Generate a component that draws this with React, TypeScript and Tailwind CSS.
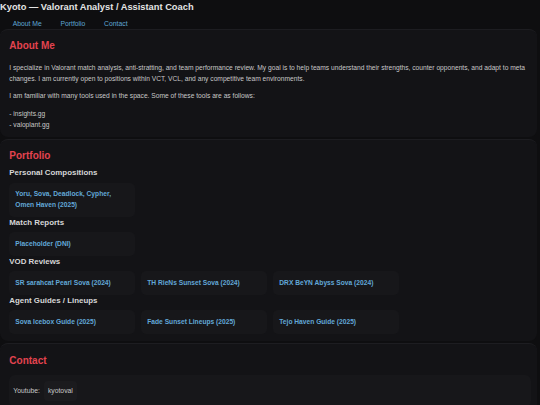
import React from "react";

const Box = ({ children }: { children: React.ReactNode }) => (
  <div className="rounded-[5px] bg-[#17171a] px-[6px] py-[6.8px] text-[6.67px] font-bold leading-[10.3px] text-[#62a8d8]">
    {children}
  </div>
);

const H3 = ({ children, mt }: { children: React.ReactNode; mt: string }) => (
  <h3 className={`${mt} mb-[4.7px] text-[7.9px] font-bold leading-[9.5px] text-[#d6d6d6]`}>{children}</h3>
);

export default function App() {
  return (
    <div
      className="min-h-[405px] bg-[#0e0e10] text-[#c8c8c8]"
      style={{ fontFamily: '"Liberation Sans", Arial, sans-serif' }}
    >
      <header className="pt-[1.7px]">
        <h1 className="text-[9.3px] font-bold leading-[11.2px] text-[#e4e4e4]">
          Kyoto — Valorant Analyst / Assistant Coach
        </h1>
        <nav className="mt-[5.3px] flex gap-[18.7px] pl-[12.7px] text-[6.8px] leading-[11px] text-[#5ea6d4]">
          <span>About Me</span>
          <span>Portfolio</span>
          <span>Contact</span>
        </nav>
      </header>

      <section className="w-[537px] rounded-[8px] border-t border-[#1d1d21] bg-[#131316] pl-[9.3px] pr-[6px] pb-[7px] pt-[9.5px]">
        <h2 className="text-[10px] font-bold leading-[12px] text-[#e3434f]">About Me</h2>
        <p className="mt-[10px] text-[6.68px] leading-[11px]">
          I specialize in Valorant match analysis, anti-stratting, and team performance review. My goal is to help
          teams understand their strengths, counter opponents, and adapt to meta changes. I am currently open to
          positions within VCT, VCL, and any competitive team environments.
        </p>
        <p className="mt-[6px] text-[6.68px] leading-[11px]">
          I am familiar with many tools used in the space. Some of these tools are as follows:
        </p>
        <div className="mt-[7px] text-[6.68px] leading-[11px]">
          <div>- insights.gg</div>
          <div>- valoplant.gg</div>
        </div>
      </section>

      <section className="mt-[2px] w-[537px] rounded-[8px] border-t border-[#1d1d21] bg-[#131316] px-[9.3px] pb-[7px] pt-[10px]">
        <h2 className="text-[10px] font-bold leading-[12px] text-[#e3434f]">Portfolio</h2>
        <H3 mt="mt-[6.8px]">Personal Compositions</H3>
        <div className="grid grid-cols-[repeat(3,125.4px)] gap-[6.6px]">
          <Box>Yoru, Sova, Deadlock, Cypher, Omen Haven (2025)</Box>
        </div>
        <H3 mt="mt-[1px]">Match Reports</H3>
        <div className="grid grid-cols-[repeat(3,125.4px)] gap-[6.6px]">
          <Box>Placeholder (DNI)</Box>
        </div>
        <H3 mt="mt-[1px]">VOD Reviews</H3>
        <div className="grid grid-cols-[repeat(3,125.4px)] gap-[6.6px]">
          <Box>SR sarahcat Pearl Sova (2024)</Box>
          <Box>TH RieNs Sunset Sova (2024)</Box>
          <Box>DRX BeYN Abyss Sova (2024)</Box>
        </div>
        <H3 mt="mt-[1px]">Agent Guides / Lineups</H3>
        <div className="grid grid-cols-[repeat(3,125.4px)] gap-[6.6px]">
          <Box>Sova Icebox Guide (2025)</Box>
          <Box>Fade Sunset Lineups (2025)</Box>
          <Box>Tejo Haven Guide (2025)</Box>
        </div>
      </section>

      <section className="mt-[2px] w-[537px] rounded-[8px] border-t border-[#1d1d21] bg-[#131316] px-[9.3px] pb-[10px] pt-[10.5px]">
        <h2 className="text-[10px] font-bold leading-[12px] text-[#e3434f]">Contact</h2>
        <div className="mt-[8.5px] flex w-[521.7px] items-center rounded-[6px] bg-[#17171a] px-[4px] py-[6px] text-[6.8px] leading-[10px]">
          <span className="text-[#c8c8c8]">Youtube:</span>
          <span className="ml-[4px] rounded-[4px] bg-[#1b1b1e] px-[4px] py-[5px] text-[#c8c8c8]">kyotoval</span>
        </div>
      </section>
    </div>
  );
}
